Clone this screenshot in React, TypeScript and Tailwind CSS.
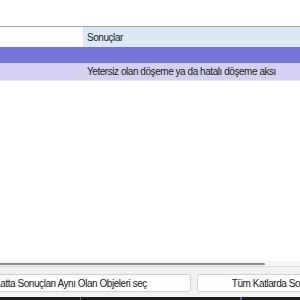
export default function App() {
  return (
    <div
      className="w-[300px] h-[300px] overflow-hidden bg-white flex flex-col text-[10px] tracking-[-0.45px] text-[#1a1a1a]"
      style={{ fontFamily: '"Liberation Sans", Arial, sans-serif' }}
    >
      <div className="h-[26px] bg-white" />
      <div className="border-t border-[#a3a3a3] flex h-[21px]">
        <div className="w-[83px] bg-white" />
        <div className="flex-1 bg-[#dbe9f7] flex items-center pl-[4px]">Sonuçlar</div>
      </div>
      <div className="h-[16px] bg-[#7875d8]" />
      <div className="h-[17px] bg-[#d5d2f1] flex">
        <div className="w-[83px]" />
        <div className="flex-1 flex items-center pl-[4px] whitespace-nowrap">
          Yetersiz olan döşeme ya da hatalı döşeme aksı
        </div>
      </div>
      <div className="flex-1 bg-white border-t border-[#e6e4f6]" />
      <div className="h-[5px] bg-[#f4f4f4] flex items-center">
        <div className="w-[265px] h-[2px] bg-[#8a8a8a] rounded-full" />
      </div>
      <div className="h-[31px] bg-[#f0f0f0] border-t border-[#dcdcdc] flex items-center gap-[6px] pt-[5px] pb-[3px]">
        <button className="shrink-0 -ml-[50px] w-[241px] h-[18px] bg-[#fdfdfd] border border-[#d0d0d0] rounded-[3px] whitespace-nowrap flex items-center justify-center">
          Katta Sonuçları Aynı Olan Objeleri seç
        </button>
        <button className="shrink-0 w-[256px] h-[18px] bg-[#fdfdfd] border border-[#d0d0d0] rounded-[3px] whitespace-nowrap flex items-center justify-center">
          Tüm Katlarda Sonuçları Aynı Olan Objeleri seç
        </button>
      </div>
      <div className="h-[3px] bg-[#1c1c1c] flex">
        <div className="w-[80px]" />
        <div className="w-[1px] bg-[#3a7d3a]" />
        <div className="w-[159px]" />
        <div className="w-[2px] bg-[#4a5ad0]" />
      </div>
    </div>
  )
}
